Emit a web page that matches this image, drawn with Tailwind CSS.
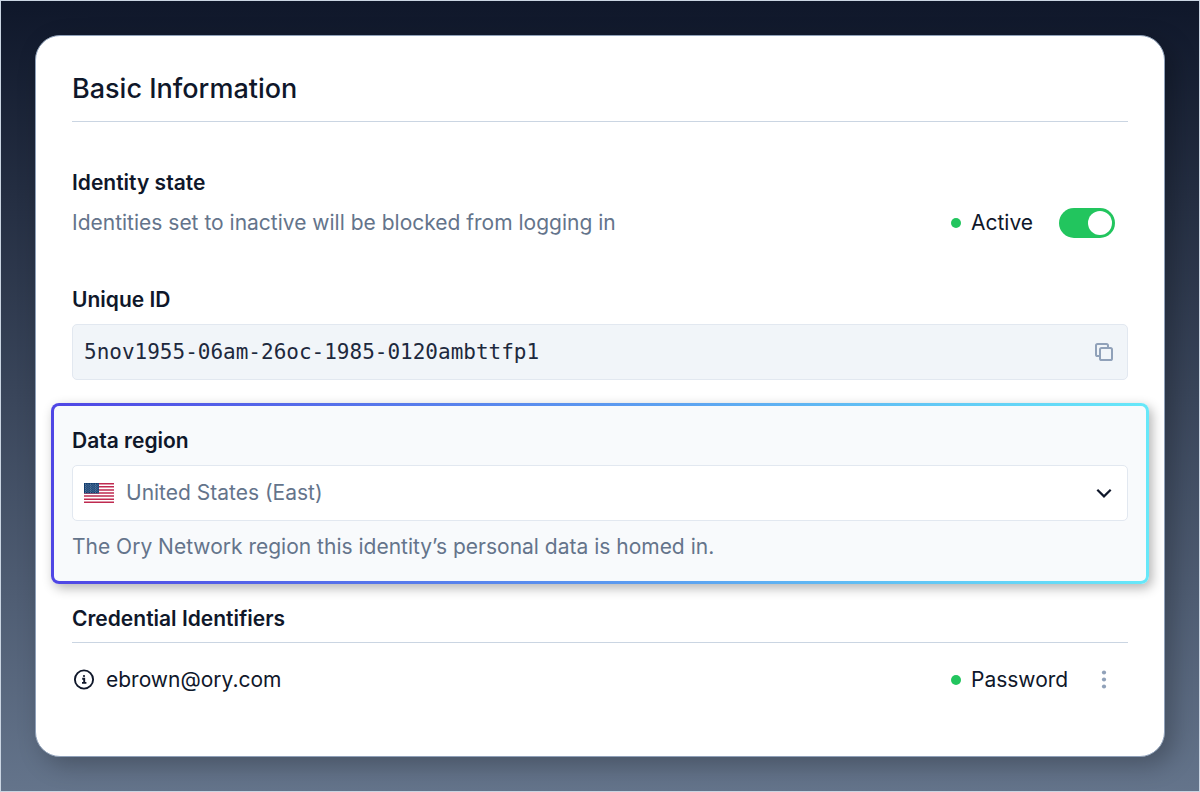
<!DOCTYPE html>
<html lang="en">
<head>
    <meta charset="UTF-8">
    <meta name="viewport" content="width=device-width, initial-scale=1.0">
    <title>Basic Information</title>
    <script src="https://cdn.jsdelivr.net/npm/@tailwindcss/browser@4"></script>
</head>
<body class="min-h-screen border border-slate-300 bg-linear-to-b/srgb from-[#0f172a] to-[#64748b] p-[34px] font-['Inter',sans-serif] text-[21px] leading-8 text-[#0f172a]">
    <main class="rounded-[25px] border border-slate-400 bg-white px-9 pt-9 pb-[60px] shadow-[8px_8px_24px_rgba(0,0,0,0.25)]">
        <h1 class="border-b border-slate-300 pb-[15px] text-[27px] leading-[34px] font-medium">Basic Information</h1>

        <!-- Identity state -->
        <section class="mt-[45px]">
            <h2 class="font-semibold" id="state-label">Identity state</h2>
            <div class="mt-2 flex items-center justify-between">
                <p class="text-[#64748b]">Identities set to inactive will be blocked from logging in</p>
                <div class="flex w-[177px] items-center">
                    <span class="mr-[10px] size-[10px] rounded-full bg-[#22c55e]"></span>
                    <label for="state">Active</label>
                    <input type="checkbox" id="state" checked class="mr-[13px] ml-auto flex h-[30px] w-14 appearance-none items-center rounded-full bg-slate-300 p-[3px] before:size-6 before:rounded-full before:bg-white checked:justify-end checked:bg-[#22c55e]">
                </div>
            </div>
        </section>

        <!-- Unique ID -->
        <section class="mt-[45px]">
            <label for="unique-id" class="block font-semibold">Unique ID</label>
            <div class="mt-2 flex h-14 items-center rounded-[5px] border border-slate-200 bg-slate-100 px-[11px]">
                <input type="text" id="unique-id" readonly value="5nov1955-06am-26oc-1985-0120ambttfp1" class="min-w-0 grow font-['DejaVu_Sans_Mono',monospace] font-light text-slate-800">
                <button type="button" aria-label="Copy" class="text-slate-400">
                    <svg class="size-6" viewBox="0 0 24 24" fill="none" stroke="currentColor" stroke-width="2" stroke-linejoin="round">
                        <rect x="8" y="8" width="12" height="12" rx="1.6"/>
                        <path d="M8 16H5.6A1.6 1.6 0 0 1 4 14.4V5.6A1.6 1.6 0 0 1 5.6 4h8.8A1.6 1.6 0 0 1 16 5.6V8"/>
                    </svg>
                </button>
            </div>
        </section>

        <!-- Data region -->
        <section class="-mx-[21px] mt-[23px] rounded-lg bg-linear-to-r/srgb from-[#4f46e5] to-[#67e8f9] p-[3px] shadow-[3px_4px_12px_rgba(0,0,0,0.3)]">
            <div class="rounded-[5px] bg-slate-50 px-[18px] pt-[19px] pb-[18px]">
                <label for="region" class="block font-semibold">Data region</label>
                <div class="relative mt-2">
                    <select id="region" class="h-14 w-full appearance-none rounded-[5px] border border-slate-200 bg-white pr-12 pl-[53px] text-[#64748b]">
                        <option>United States (East)</option>
                    </select>
                    <svg class="pointer-events-none absolute top-[18px] left-3 h-5 w-[30px]" viewBox="0 0 30 20">
                        <path fill="#fff" d="M0 0h30v20H0z"/>
                        <path stroke="#bf2a50" stroke-width="1.54" d="M0 .77h30M0 3.85h30M0 6.92h30M0 10h30M0 13.08h30M0 16.15h30M0 19.23h30"/>
                        <path fill="#0f3b6e" d="M0 0h15v10.4H0z"/>
                        <path stroke="#7d97b4" stroke-width=".9" stroke-dasharray="1 1.5" d="M1 1.2h13.5M1 3.2h13.5M1 5.2h13.5M1 7.2h13.5M1 9.2h13.5"/>
                        <path stroke="#7d97b4" stroke-width=".8" stroke-dasharray="1 1.5" d="M2.2 2.2H14M2.2 4.2H14M2.2 6.2H14M2.2 8.2H14"/>
                    </svg>
                    <svg class="pointer-events-none absolute top-4 right-3 size-6" viewBox="0 0 24 24" fill="none" stroke="currentColor" stroke-width="2.2">
                        <path d="m5.3 8.7 6.7 6.7 6.7-6.7"/>
                    </svg>
                </div>
                <p class="mt-[10px] text-[#64748b]">The Ory Network region this identity’s personal data is homed in.</p>
            </div>
        </section>

        <!-- Credentials -->
        <section class="mt-[19px]">
            <h2 class="border-b border-slate-300 pb-[7px] font-semibold">Credential Identifiers</h2>
            <div class="mt-[21px] flex items-center justify-between">
                <div class="flex items-center gap-[10px]">
                    <svg class="size-6" viewBox="0 0 24 24" fill="none" stroke="currentColor" stroke-width="1.9">
                        <circle cx="12" cy="11.5" r="9.1"/>
                        <path d="M10.2 10.8h2v4M10 14.9h4.4"/>
                        <circle cx="12" cy="8" r="1.1" fill="currentColor" stroke="none"/>
                    </svg>
                    <span>ebrown@ory.com</span>
                </div>
                <div class="flex w-[177px] items-center">
                    <span class="mr-[10px] size-[10px] rounded-full bg-[#22c55e]"></span>
                    <span>Password</span>
                    <button type="button" aria-label="More" class="mr-3 ml-auto text-slate-400">
                        <svg class="size-6" viewBox="0 0 24 24" fill="currentColor">
                            <circle cx="12" cy="4.5" r="2.1"/>
                            <circle cx="12" cy="11.5" r="2.1"/>
                            <circle cx="12" cy="18.5" r="2.1"/>
                        </svg>
                    </button>
                </div>
            </div>
        </section>
    </main>
</body>
</html>
